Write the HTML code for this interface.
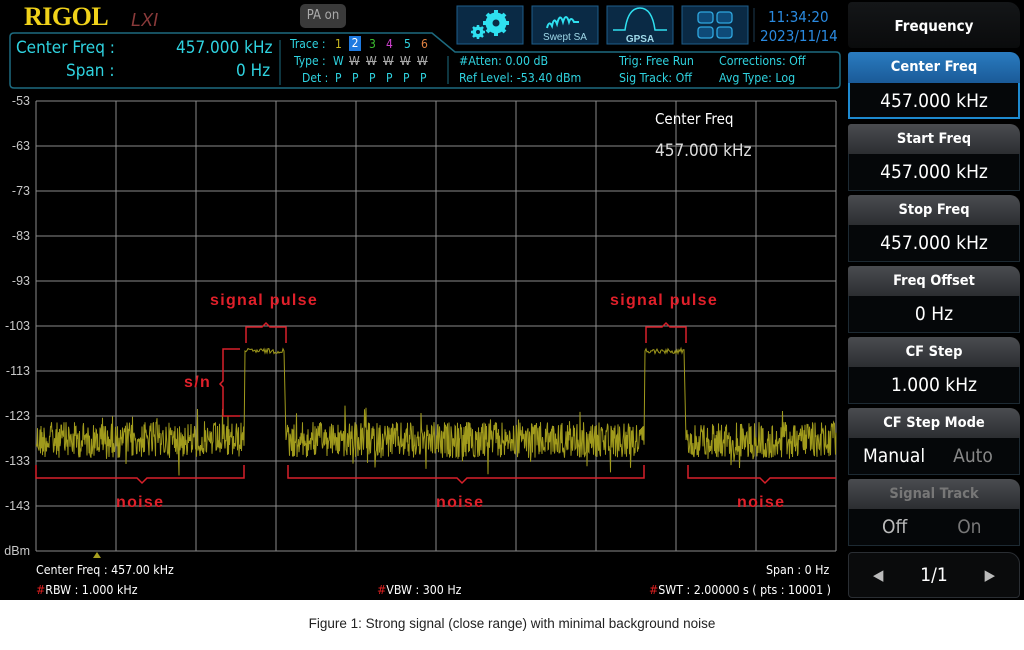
<!DOCTYPE html>
<html><head><meta charset="utf-8">
<style>
*{margin:0;padding:0;box-sizing:border-box}
body{width:1024px;height:650px;background:#fff;font-family:"Liberation Sans",sans-serif;position:relative;overflow:hidden}
#scr{position:absolute;left:0;top:0;width:1024px;height:600px;background:#000}
.t{position:absolute;white-space:nowrap;font-family:"DejaVu Sans Condensed","Liberation Sans",sans-serif}
.cy{color:#2fd3e0}
.ax{color:#c8c8c8;font-size:12.5px;right:994px;text-align:right;font-family:"Liberation Sans",sans-serif}
.btn{position:absolute;left:848px;width:172px}
.bh{height:30px;background:linear-gradient(#4a4c50,#2c2e31);border-radius:3px 10px 0 0;color:#fff;font:bold 14.5px "DejaVu Sans Condensed","Liberation Sans",sans-serif;text-align:center;line-height:30px}
.bv{height:37px;background:#050709;border:1px solid #1d2a33;border-top:none;color:#fff;font:19px "DejaVu Sans Condensed","Liberation Sans",sans-serif;text-align:center;line-height:36px}
.red{color:#e0202a;font:bold 16px "Liberation Sans",sans-serif;letter-spacing:1.3px;position:absolute}
.d{position:absolute;font-size:12px;font-family:"DejaVu Sans Condensed",sans-serif}
</style></head><body>
<div id="scr">
<div class="t" style="left:24px;top:2px;font:bold 26px 'Liberation Serif',serif;color:#f0d21a;letter-spacing:-0.5px">RIGOL</div>
<div class="t" style="left:131px;top:10px;font:italic 18px 'Liberation Sans',sans-serif;color:#8a3a3a">LXI</div>
<div class="t" style="left:300px;top:4px;width:46px;height:24px;background:#3a3a3a;border-radius:5px;color:#aaa;font-size:13px;text-align:center;line-height:24px">PA on</div>
<svg style="position:absolute;left:0;top:0" width="1024" height="600">
<path d="M14 33 H432 L455 52 H836 Q840 52 840 56 V84 Q840 88 836 88 H14 Q10 88 10 84 V37 Q10 33 14 33Z" fill="none" stroke="#1d6b80" stroke-width="1.5"/>
<line x1="280" y1="40" x2="280" y2="85" stroke="#1d6b80"/>
<line x1="448" y1="56" x2="448" y2="84" stroke="#1d6b80"/>
<g fill="#0a2a45" stroke="#1e5e8c">
<rect x="457" y="6" width="66" height="38"/><rect x="532" y="6" width="66" height="38"/><rect x="607" y="6" width="66" height="38"/><rect x="682" y="6" width="66" height="38"/>
</g>
<g stroke="#2fe0f0" stroke-linecap="butt">
<circle cx="496" cy="23" r="8" fill="none" stroke-width="5"/>
<g stroke-width="4"><line x1="496" y1="10" x2="496" y2="36"/><line x1="483" y1="23" x2="509" y2="23"/><line x1="487" y1="14" x2="505" y2="32"/><line x1="505" y1="14" x2="487" y2="32"/></g>
<circle cx="478" cy="32" r="4" fill="none" stroke-width="3"/>
<g stroke-width="2.5"><line x1="478" y1="25" x2="478" y2="39"/><line x1="471" y1="32" x2="485" y2="32"/><line x1="473" y1="27" x2="483" y2="37"/><line x1="483" y1="27" x2="473" y2="37"/></g>
</g>
<circle cx="496" cy="23" r="4.5" fill="#0a2a45" stroke="#2fe0f0" stroke-width="2"/>
<circle cx="478" cy="32" r="2" fill="#0a2a45"/>
<path d="M547 28 q2-8 5-2 q2-10 5-2 q3-12 6-2 q3-10 6 0 q2-6 5 0 h5" fill="none" stroke="#2fe0f0" stroke-width="2"/>
<text x="565" y="40" font-size="10" fill="#9fd8e8" text-anchor="middle" font-family="Liberation Sans">Swept SA</text>
<path d="M613 30 h12 q3-22 15 -22 q12 0 15 22 h12" fill="none" stroke="#2fe0f0" stroke-width="1.5"/>
<text x="640" y="42" font-size="10" font-weight="bold" fill="#9fd8e8" text-anchor="middle" font-family="Liberation Sans">GPSA</text>
<g fill="#0e4a78" stroke="#2fa8e0" stroke-width="1.3"><rect x="698" y="12" width="15" height="11" rx="3"/><rect x="717" y="12" width="15" height="11" rx="3"/><rect x="698" y="27" width="15" height="11" rx="3"/><rect x="717" y="27" width="15" height="11" rx="3"/></g>
<line x1="754" y1="8" x2="754" y2="42" stroke="#1d3a50"/>
<g stroke="#8a8a8a" stroke-width="1">
<line x1="36" y1="101" x2="836" y2="101"/><line x1="36" y1="146" x2="836" y2="146"/><line x1="36" y1="191" x2="836" y2="191"/><line x1="36" y1="236" x2="836" y2="236"/><line x1="36" y1="281" x2="836" y2="281"/><line x1="36" y1="326" x2="836" y2="326"/><line x1="36" y1="371" x2="836" y2="371"/><line x1="36" y1="416" x2="836" y2="416"/><line x1="36" y1="461" x2="836" y2="461"/><line x1="36" y1="506" x2="836" y2="506"/><line x1="36" y1="551" x2="836" y2="551"/>
<line x1="36" y1="101" x2="36" y2="551"/><line x1="116" y1="101" x2="116" y2="551"/><line x1="196" y1="101" x2="196" y2="551"/><line x1="276" y1="101" x2="276" y2="551"/><line x1="356" y1="101" x2="356" y2="551"/><line x1="436" y1="101" x2="436" y2="551"/><line x1="516" y1="101" x2="516" y2="551"/><line x1="596" y1="101" x2="596" y2="551"/><line x1="676" y1="101" x2="676" y2="551"/><line x1="756" y1="101" x2="756" y2="551"/><line x1="836" y1="101" x2="836" y2="551"/>
</g>
<path id="tr" fill="none" stroke="#a09a1c" stroke-width="1"/>
<g fill="none" stroke="#d8202a" stroke-width="1.5">
<path d="M36 465 V478 H137 l5 5 l5 -5 H244 V465"/>
<path d="M288 465 V478 H457 l5 5 l5 -5 H644 V465"/>
<path d="M688 465 V478 H760 l5 5 l5 -5 H836"/>
<path d="M246 343 V327 H262 l4 -4 l4 4 H286 V343"/>
<path d="M646 343 V327 H662 l4 -4 l4 4 H686 V343"/>
<path d="M240 349 H223 V381 l-3 3 l3 3 V416 H240"/>
</g>
<polygon points="97,552 93,558 101,558" fill="#a8a020"/>
</svg>
<div class="t cy" style="left:16px;top:38px;font-size:17px">Center Freq :</div>
<div class="t cy" style="left:66px;top:61px;font-size:17px">Span :</div>
<div class="t cy" style="left:176px;top:38px;font-size:17px">457.000 kHz</div>
<div class="t cy" style="left:236px;top:61px;font-size:17px">0 Hz</div>
<div class="d cy" style="left:290px;top:37px">Trace :</div>
<div class="d cy" style="left:294px;top:54px">Type :</div>
<div class="d cy" style="left:302px;top:71px">Det :</div>
<div class="d" style="left:335px;top:37px;color:#c8b820">1</div>
<div class="d" style="left:349px;top:36px;background:#1e7ae0;color:#fff;width:12px;height:15px;text-align:center">2</div>
<div class="d" style="left:369px;top:37px;color:#3cc030">3</div>
<div class="d" style="left:386px;top:37px;color:#d040d0">4</div>
<div class="d cy" style="left:404px;top:37px">5</div>
<div class="d" style="left:421px;top:37px;color:#e08040">6</div>
<div class="d cy" style="left:333px;top:54px">W</div>
<div class="d" style="left:349px;top:54px;color:#aaa"><s>W</s></div><div class="d" style="left:366px;top:54px;color:#aaa"><s>W</s></div><div class="d" style="left:383px;top:54px;color:#aaa"><s>W</s></div><div class="d" style="left:400px;top:54px;color:#aaa"><s>W</s></div><div class="d" style="left:417px;top:54px;color:#aaa"><s>W</s></div>
<div class="d cy" style="left:335px;top:71px">P</div><div class="d cy" style="left:352px;top:71px">P</div><div class="d cy" style="left:369px;top:71px">P</div><div class="d cy" style="left:386px;top:71px">P</div><div class="d cy" style="left:403px;top:71px">P</div><div class="d cy" style="left:420px;top:71px">P</div>
<div class="t cy" style="left:459px;top:54px;font-size:12.3px">#Atten: 0.00 dB</div>
<div class="t cy" style="left:459px;top:71px;font-size:12.3px">Ref Level: -53.40 dBm</div>
<div class="t cy" style="left:619px;top:54px;font-size:12.3px">Trig: Free Run</div>
<div class="t cy" style="left:619px;top:71px;font-size:12.3px">Sig Track: Off</div>
<div class="t cy" style="left:719px;top:54px;font-size:12.3px">Corrections: Off</div>
<div class="t cy" style="left:719px;top:71px;font-size:12.3px">Avg Type: Log</div>
<div class="t" style="left:768px;top:8px;font-size:15px;color:#2a8ae0">11:34:20</div>
<div class="t" style="left:760px;top:27px;font-size:15px;color:#2a8ae0">2023/11/14</div>

<div class="t ax" style="top:94px">-53</div><div class="t ax" style="top:139px">-63</div><div class="t ax" style="top:184px">-73</div><div class="t ax" style="top:229px">-83</div><div class="t ax" style="top:274px">-93</div><div class="t ax" style="top:319px">-103</div><div class="t ax" style="top:364px">-113</div><div class="t ax" style="top:409px">-123</div><div class="t ax" style="top:454px">-133</div><div class="t ax" style="top:499px">-143</div><div class="t ax" style="top:544px">dBm</div>

<div class="t" style="left:655px;top:110px;color:#fff;font-size:15px">Center Freq</div>
<div class="t" style="left:655px;top:141px;color:#ddd;font-size:17px">457.000 kHz</div>

<div class="red" style="left:210px;top:292px">signal pulse</div>
<div class="red" style="left:610px;top:292px">signal pulse</div>
<div class="red" style="left:184px;top:374px">s/n</div>
<div class="red" style="left:116px;top:494px">noise</div>
<div class="red" style="left:436px;top:494px">noise</div>
<div class="red" style="left:737px;top:494px">noise</div>

<div class="t" style="left:36px;top:563px;color:#fff;font-size:12.3px">Center Freq : 457.00 kHz</div>
<div class="t" style="left:36px;top:583px;color:#fff;font-size:12.3px"><span style="color:#e02020">#</span>RBW : 1.000 kHz</div>
<div class="t" style="left:377px;top:583px;color:#fff;font-size:12.3px"><span style="color:#e02020">#</span>VBW : 300 Hz</div>
<div class="t" style="left:766px;top:563px;color:#fff;font-size:12.3px">Span : 0 Hz</div>
<div class="t" style="left:649px;top:583px;color:#fff;font-size:12.3px"><span style="color:#e02020">#</span>SWT : 2.00000 s ( pts : 10001 )</div>

<div class="btn" style="top:2px;height:46px;background:linear-gradient(#141618,#0a0b0c);border-radius:4px 12px 4px 4px;color:#fff;font:bold 15px 'DejaVu Sans Condensed',sans-serif;text-align:center;line-height:48px">Frequency</div>
<div class="btn" style="top:52px"><div class="bh" style="background:linear-gradient(#2a7cc0,#1a5a98);height:31px">Center Freq</div><div class="bv" style="border:2px solid #1e8ad0;border-top:none;height:36px">457.000 kHz</div></div>
<div class="btn" style="top:124px"><div class="bh">Start Freq</div><div class="bv">457.000 kHz</div></div>
<div class="btn" style="top:195px"><div class="bh">Stop Freq</div><div class="bv">457.000 kHz</div></div>
<div class="btn" style="top:266px"><div class="bh">Freq Offset</div><div class="bv">0 Hz</div></div>
<div class="btn" style="top:337px"><div class="bh">CF Step</div><div class="bv">1.000 kHz</div></div>
<div class="btn" style="top:408px"><div class="bh">CF Step Mode</div><div class="bv" style="text-align:left"><span style="margin-left:14px">Manual</span><span style="color:#888;margin-left:28px">Auto</span></div></div>
<div class="btn" style="top:479px"><div class="bh" style="color:#777">Signal Track</div><div class="bv" style="text-align:left"><span style="margin-left:33px;color:#bbb">Off</span><span style="color:#777;margin-left:50px">On</span></div></div>
<div class="btn" style="top:552px;height:46px;background:#0a0b0c;border:1px solid #2a2e33;border-radius:4px 12px 4px 4px;color:#fff;font:19px 'DejaVu Sans Condensed',sans-serif;text-align:center;line-height:44px"><span style="color:#bbb;font-size:15px;float:left;margin-left:24px">◀</span>1/1<span style="color:#bbb;font-size:15px;float:right;margin-right:24px">▶</span></div>
</div>
<div class="t" style="left:0;width:1024px;top:616px;text-align:center;font:13.5px 'Liberation Sans',sans-serif;color:#222">Figure 1: Strong signal (close range) with minimal background noise</div>
<script>
var s=12345;function r(){s=(s*1103515245+12345)%2147483648;return s/2147483648;}
var d="";
function noise(a,b){for(var x=a;x<=b;x+=0.5){var y=440+(r()-0.5)*36+(r()<0.08?(r()-0.5)*44:0);d+=(d?"L":"M")+x.toFixed(1)+" "+y.toFixed(1);}}
function pulse(a,b){for(var x=a;x<=b;x+=1){var y=351+(r()-0.5)*5;d+="L"+x+" "+y.toFixed(1);}}
noise(36,244);d+="L245 351";pulse(246,284);d+="L286 440";noise(287,644);d+="L645 351";pulse(646,684);d+="L686 440";noise(687,836);
document.getElementById("tr").setAttribute("d",d);
</script>
</body></html>
